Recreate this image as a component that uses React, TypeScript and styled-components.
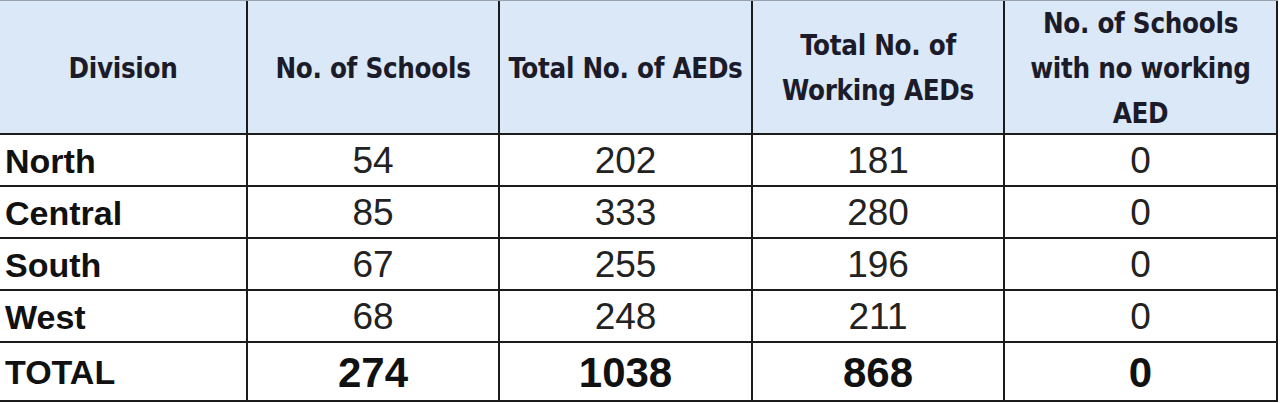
import React from 'react';
import styled, { createGlobalStyle } from 'styled-components';

const GlobalStyle = createGlobalStyle`
  html, body {
    margin: 0;
    padding: 0;
    background: #fff;
  }
  body {
    font-family: 'Liberation Sans', Arial, sans-serif;
  }
`;

const Sheet = styled.div`
  width: 1280px;
  height: 403px;
  overflow: hidden;
  background: #fff;
`;

const Grid = styled.div`
  display: grid;
  grid-template-columns: 248px 252px 253px 252px 273px;
  grid-template-rows: 134px repeat(4, 52px) 59px;
  border-top: 1px solid #9aa3ad;
  width: 1278px;
`;

const HeadCell = styled.div`
  background: #dae8f8;
  border-right: 2px solid #1c1c1c;
  border-bottom: 2px solid #1c1c1c;
  display: flex;
  align-items: center;
  justify-content: center;
  text-align: center;
  white-space: nowrap;
  font-family: 'DejaVu Sans Condensed', 'Liberation Sans Narrow', 'Roboto', sans-serif;
  font-weight: 700;
  font-size: 27.5px;
  letter-spacing: -0.3px;
  line-height: 45px;
  color: #1b1b2a;
  padding-top: 2px;
`;

const Cell = styled.div<{ $label?: boolean; $total?: boolean }>`
  border-right: 2px solid #1c1c1c;
  border-bottom: 2px solid #1c1c1c;
  display: flex;
  align-items: center;
  justify-content: ${p => (p.$label ? 'flex-start' : 'center')};
  padding-left: ${p => (p.$label ? '5px' : '0')};
  padding-top: 2px;
  font-family: 'Liberation Sans', Arial, sans-serif;
  font-weight: ${p => (p.$label || p.$total ? 700 : 400)};
  font-size: ${p => (p.$label ? '34px' : p.$total ? '42px' : '37px')};
  color: ${p => (p.$label || p.$total ? '#111' : '#222')};
`;

const header = [
  'Division',
  'No. of Schools',
  'Total No. of AEDs',
  'Total No. of\nWorking AEDs',
  'No. of Schools\nwith no working\nAED',
];

const rows = [
  ['North', '54', '202', '181', '0'],
  ['Central', '85', '333', '280', '0'],
  ['South', '67', '255', '196', '0'],
  ['West', '68', '248', '211', '0'],
];

const totals = ['TOTAL', '274', '1038', '868', '0'];

const App = () => {
  return (
    <Sheet>
      <GlobalStyle />
      <Grid>
        {header.map(h => (
          <HeadCell key={h}>
            <span>
              {h.split('\n').map((line, i) => (
                <React.Fragment key={line}>
                  {i > 0 && <br />}
                  {line}
                </React.Fragment>
              ))}
            </span>
          </HeadCell>
        ))}
        {rows.map(row =>
          row.map((val, i) => (
            <Cell key={row[0] + i} $label={i === 0}>
              {val}
            </Cell>
          ))
        )}
        {totals.map((val, i) => (
          <Cell key={'t' + i} $label={i === 0} $total>
            {val}
          </Cell>
        ))}
      </Grid>
    </Sheet>
  );
};

export default App;
